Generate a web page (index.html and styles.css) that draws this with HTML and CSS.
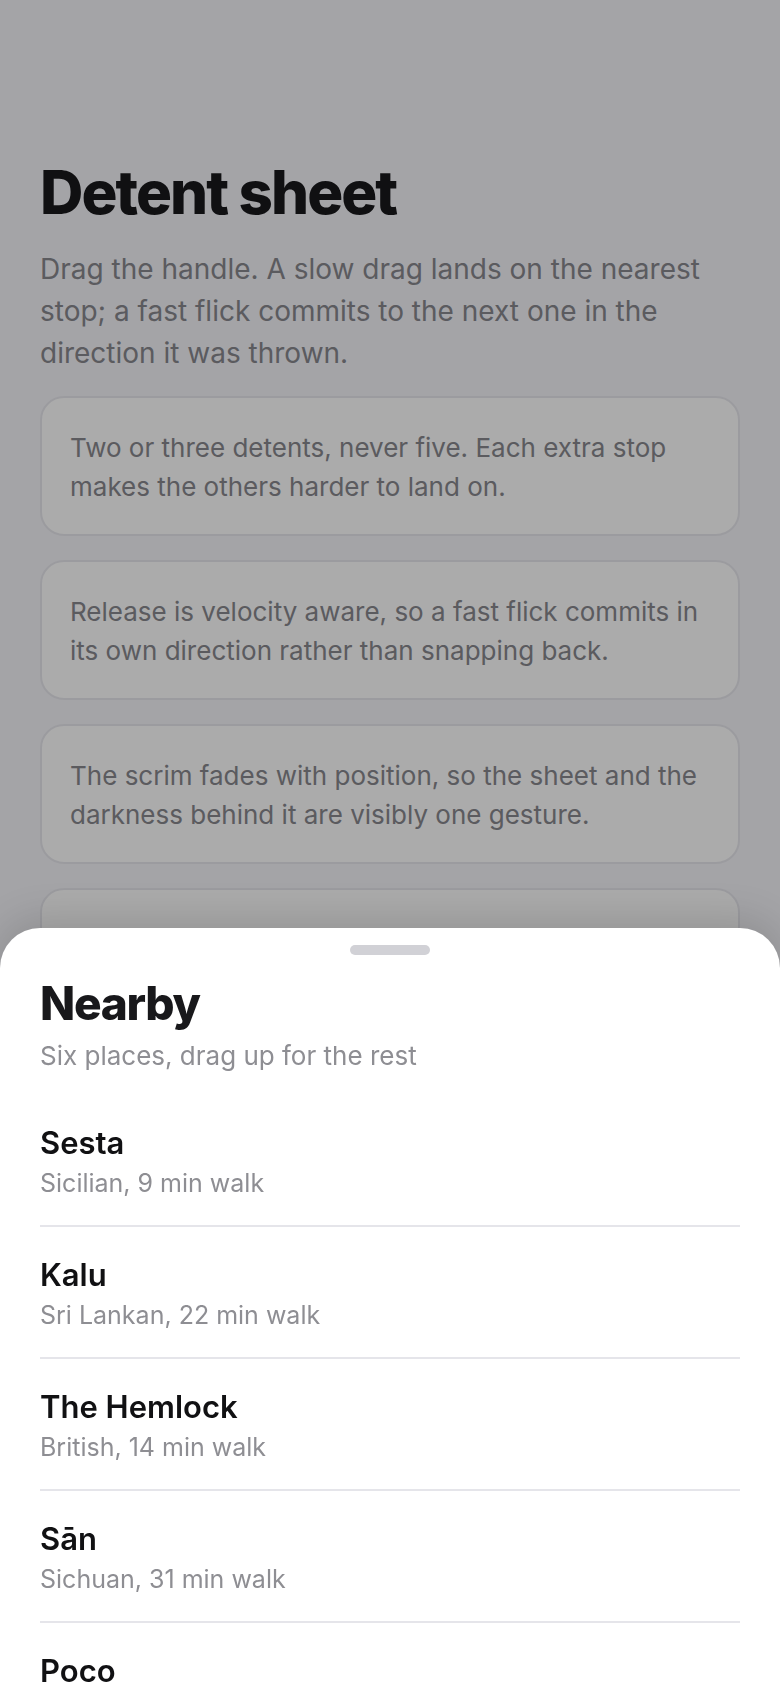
FILE: index.html
```html
<!DOCTYPE html>
<html lang="en">
<head>
    <meta charset="UTF-8">
    <meta name="viewport" content="width=device-width, initial-scale=1.0">
    <title>Detent sheet</title>
    <link rel="stylesheet" href="styles.css">
</head>
<body>
    <main class="page">
        <h1 class="page-title">Detent sheet</h1>
        <p class="page-intro">Drag the handle. A slow drag lands on the nearest stop; a fast flick commits to the next one in the direction it was thrown.</p>

        <div class="note">Two or three detents, never five. Each extra stop makes the others harder to land on.</div>
        <div class="note">Release is velocity aware, so a fast flick commits in its own direction rather than snapping back.</div>
        <div class="note">The scrim fades with position, so the sheet and the darkness behind it are visibly one gesture.</div>
        <div class="note">Past the last stop the sheet rubber-bands, so the edge feels soft instead of walled off.</div>
    </main>

    <!-- scrim and sheet sit over the page -->
    <div class="scrim"></div>

    <section class="sheet">
        <div class="sheet-handle"></div>
        <header class="sheet-header">
            <h2 class="sheet-title">Nearby</h2>
            <p class="sheet-sub">Six places, drag up for the rest</p>
        </header>

        <ul class="place-list">
            <li class="place">
                <div class="place-name">Sesta</div>
                <div class="place-meta">Sicilian, 9 min walk</div>
            </li>
            <li class="place">
                <div class="place-name">Kalu</div>
                <div class="place-meta">Sri Lankan, 22 min walk</div>
            </li>
            <li class="place">
                <div class="place-name">The Hemlock</div>
                <div class="place-meta">British, 14 min walk</div>
            </li>
            <li class="place">
                <div class="place-name">Sān</div>
                <div class="place-meta">Sichuan, 31 min walk</div>
            </li>
            <li class="place">
                <div class="place-name">Poco</div>
                <div class="place-meta">Tapas, 18 min walk</div>
            </li>
            <li class="place">
                <div class="place-name">Ember</div>
                <div class="place-meta">Grill, 26 min walk</div>
            </li>
        </ul>
    </section>
</body>
</html>
```

FILE: styles.css
```css
* {
    box-sizing: border-box;
    margin: 0;
    padding: 0;
}

html, body {
    height: 100%;
    overflow: hidden;
}

body {
    font-family: Inter, "Noto Sans", sans-serif;
    background-color: #f2f2f7;
    color: #18181b;
}

.page {
    padding: 159px 40px 0;
}

.page-title {
    font-size: 60px;
    font-weight: 800;
    line-height: 66px;
    letter-spacing: -0.032em;
    margin-bottom: 23px;
}

.page-intro {
    font-size: 28px;
    line-height: 42px;
    color: #86868c;
    margin-bottom: 22px;
}

.note {
    background-color: #fcfcfd;
    border: 2px solid #e5e5ea;
    border-radius: 24px;
    padding: 30px 28px 28px;
    font-size: 26px;
    line-height: 39px;
    color: #86868c;
    margin-bottom: 24px;
}

.scrim {
    position: fixed;
    inset: 0;
    background-color: rgba(0, 0, 0, 0.32);
}

.sheet {
    position: fixed;
    left: 0;
    right: 0;
    bottom: 0;
    height: 760px;
    background-color: #fff;
    border-radius: 40px 40px 0 0;
    box-shadow: 0 -8px 40px rgba(0, 0, 0, 0.14);
    padding: 17px 40px 0;
    overflow: hidden;
}

.sheet-handle {
    width: 80px;
    height: 10px;
    border-radius: 5px;
    background-color: #d1d1d6;
    margin: 0 auto 22px;
}

.sheet-title {
    font-size: 46px;
    font-weight: 800;
    line-height: 52px;
    letter-spacing: -0.028em;
    margin-bottom: 10px;
}

.sheet-sub {
    font-size: 26px;
    line-height: 34px;
    color: #8e8e93;
}

.place-list {
    list-style-type: none;
    margin-top: 22px;
}

.place {
    padding: 30px 0 26px;
    border-bottom: 2px solid #e5e5ea;
}

.place-name {
    font-size: 31px;
    font-weight: 600;
    line-height: 36px;
    color: #111113;
}

.place-meta {
    font-size: 25px;
    line-height: 32px;
    color: #8e8e93;
    margin-top: 6px;
}
```
